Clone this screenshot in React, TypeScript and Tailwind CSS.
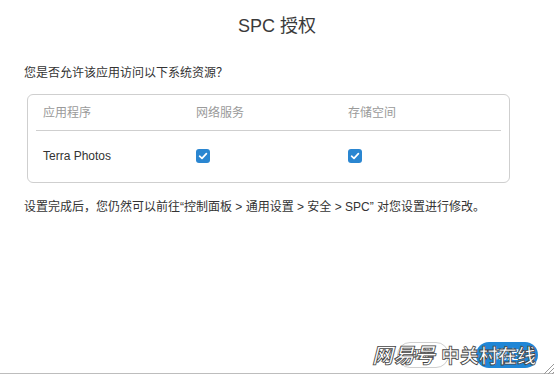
import React from "react";

const font = "font-['Liberation_Sans','Noto_Sans_CJK_SC',sans-serif]";

function Check() {
  return (
    <span className="flex h-[14px] w-[14px] items-center justify-center rounded-[3px] bg-[#2a86d1]">
      <svg width="10" height="10" viewBox="0 0 10 10">
        <path d="M1.6 5.2 L4 7.4 L8.4 2.6" fill="none" stroke="white" strokeWidth="1.7" strokeLinecap="round" strokeLinejoin="round" />
      </svg>
    </span>
  );
}

export default function App() {
  return (
    <div className={`relative h-[375px] w-[554px] overflow-hidden bg-white text-[#333] ${font}`}>
      <div className="pt-[15px] text-center text-[18px] leading-[22px] text-[#3a3a3a]">SPC 授权</div>
      <div className="mt-[28px] pl-[24px] text-[12px] leading-[16px]">您是否允许该应用访问以下系统资源？</div>
      <div className="ml-[27px] mt-[13px] h-[89px] w-[483px] rounded-[6px] border border-[#cfcfcf]">
        <div className="mx-[8px] flex h-[36px] items-center border-b border-[#cfcfcf] text-[12px] text-[#9a9a9a]">
          <div className="w-[160px] pl-[7px]">应用程序</div>
          <div className="w-[152px]">网络服务</div>
          <div>存储空间</div>
        </div>
        <div className="mx-[8px] flex h-[51px] items-center pb-[1px] text-[12px] text-[#333]">
          <div className="w-[160px] pl-[7px]">Terra Photos</div>
          <div className="w-[152px]"><Check /></div>
          <div><Check /></div>
        </div>
      </div>
      <div className="mt-[16px] pl-[24px] text-[12px] leading-[16px]">
        设置完成后，您仍然可以前往“控制面板 &gt; 通用设置 &gt; 安全 &gt; SPC” 对您设置进行修改。
      </div>

      <div className="absolute bottom-[7px] right-[16px] flex items-center gap-[27px]">
        <button className="h-[26px] w-[52px] rounded-full border border-[#cfcfcf] bg-white text-[12px] text-[#555]">取消</button>
        <button className="h-[26px] w-[62px] rounded-full bg-[#1f86d6] text-[12px] text-white">确定</button>
      </div>

      <div className="absolute bottom-[1px] left-0 h-[1px] w-full bg-[#bdbdbd]" />
      <svg className="absolute bottom-[1px] right-0" width="12" height="12" viewBox="0 0 12 12">
        <path d="M12 2 L2 12 M12 6 L6 12 M12 10 L10 12" stroke="#999" strokeWidth="1" />
      </svg>

      <div className="pointer-events-none absolute left-[372px] top-[340px] flex items-baseline gap-[6px] font-['Noto_Sans_CJK_SC',sans-serif] font-bold text-white [-webkit-text-stroke:0.8px_#444]">
        <span className="text-[21px] italic leading-[28px]">网易号</span>
        <span className="text-[19px] leading-[28px]">中关村在线</span>
      </div>
    </div>
  );
}
